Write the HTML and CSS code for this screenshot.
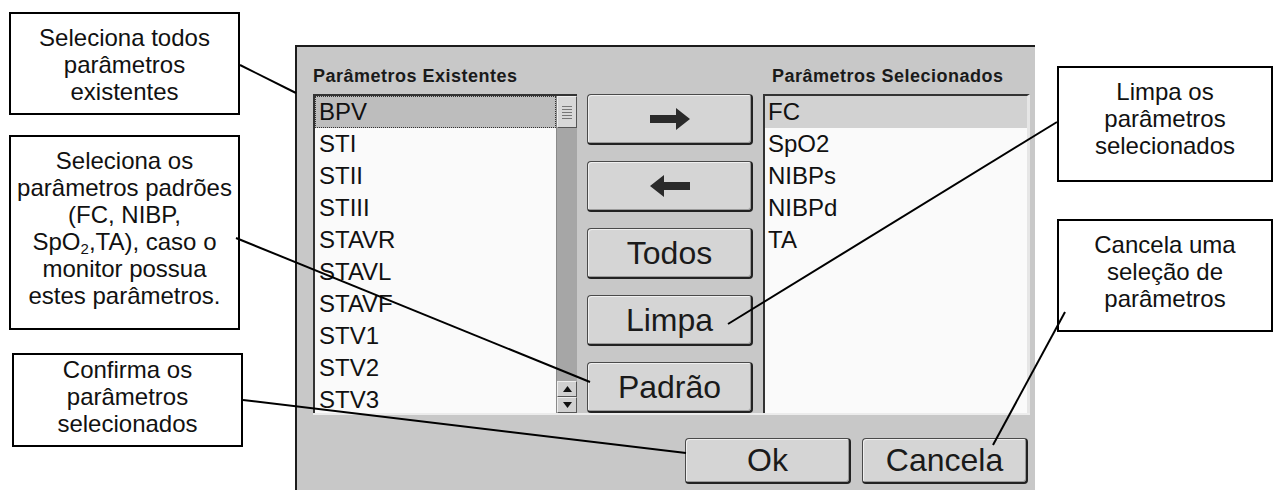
FILE: index.html
```html
<!DOCTYPE html>
<html lang="pt">
<head>
<meta charset="utf-8">
<title>Seleção de parâmetros</title>
<link rel="stylesheet" href="styles.css">
</head>
<body>
<div class="page">
  <div class="notes-left">
    <div class="note note-1">Seleciona todos<br>parâmetros<br>existentes</div>
    <div class="note note-2">Seleciona os<br>parâmetros padrões<br>(FC, NIBP,<br>SpO<sub class="sub">2</sub>,TA), caso o<br>monitor possua<br>estes parâmetros.</div>
    <div class="note note-3">Confirma os<br>parâmetros<br>selecionados</div>
  </div>

  <div class="dialog">
    <div class="panel">
      <div class="label label-left">Parâmetros Existentes</div>
      <div class="label label-right">Parâmetros Selecionados</div>

      <div class="list list-left">
        <div class="items">
          <div class="item selected">BPV</div>
          <div class="item">STI</div>
          <div class="item">STII</div>
          <div class="item">STIII</div>
          <div class="item">STAVR</div>
          <div class="item">STAVL</div>
          <div class="item">STAVF</div>
          <div class="item">STV1</div>
          <div class="item">STV2</div>
          <div class="item">STV3</div>
        </div>
        <div class="scrollbar">
          <div class="thumb"><span></span><span></span><span></span><span></span><span></span></div>
          <div class="track"></div>
          <div class="sb-btn"><svg width="9" height="6" viewBox="0 0 9 6"><polygon points="0,6 9,6 4.5,0" fill="#111"/></svg></div>
          <div class="sb-btn"><svg width="9" height="6" viewBox="0 0 9 6"><polygon points="0,0 9,0 4.5,6" fill="#111"/></svg></div>
        </div>
      </div>

      <div class="mid">
        <div class="btn"><svg width="40" height="22" viewBox="0 0 40 22"><polygon points="0,7 26,7 26,0 40,11 26,22 26,15 0,15" fill="#2a2a2a"/></svg></div>
        <div class="btn"><svg width="40" height="22" viewBox="0 0 40 22"><polygon points="40,7 14,7 14,0 0,11 14,22 14,15 40,15" fill="#2a2a2a"/></svg></div>
        <div class="btn">Todos</div>
        <div class="btn">Limpa</div>
        <div class="btn">Padrão</div>
      </div>

      <div class="list list-right">
        <div class="items">
          <div class="item selected-soft">FC</div>
          <div class="item">SpO2</div>
          <div class="item">NIBPs</div>
          <div class="item">NIBPd</div>
          <div class="item">TA</div>
        </div>
      </div>
    </div>
    <div class="sep"></div>
    <div class="actions">
      <div class="btn btn-wide">Ok</div>
      <div class="btn btn-wide">Cancela</div>
    </div>
  </div>

  <div class="notes-right">
    <div class="note note-4">Limpa os<br>parâmetros<br>selecionados</div>
    <div class="note note-5">Cancela uma<br>seleção de<br>parâmetros</div>
  </div>

  <svg class="leaders" width="1273" height="490" viewBox="0 0 1273 490">
    <g stroke="#000" stroke-width="2" fill="none">
      <line x1="240" y1="65" x2="296" y2="93"/>
      <line x1="236" y1="238" x2="590" y2="382"/>
      <line x1="243" y1="400" x2="686" y2="453"/>
      <line x1="1057" y1="122" x2="728" y2="324"/>
      <line x1="1065" y1="312" x2="993" y2="445"/>
    </g>
  </svg>
</div>
</body>
</html>
```

FILE: styles.css
```css
* { box-sizing: border-box; }

html, body {
  margin: 0;
  padding: 0;
  background: #ffffff;
}

body {
  font-family: "Liberation Sans", Arial, sans-serif;
  color: #111;
}

.page {
  position: relative;
  width: 1273px;
  height: 490px;
  overflow: hidden;
  display: flex;
}

/* ---------- callouts ---------- */
.notes-left {
  width: 295px;
  flex: none;
  display: flex;
  flex-direction: column;
  padding-top: 12px;
}

.notes-right {
  flex: none;
  width: 216px;
  margin-left: 22px;
  display: flex;
  flex-direction: column;
  padding-top: 66px;
}

.note {
  background: #fff;
  border: 2px solid #000;
  font-size: 24px;
  line-height: 27px;
  text-align: center;
  color: #111;
}

.note-1 { margin-left: 9px; width: 231px; height: 103px; padding-top: 10px; }
.note-2 { margin-left: 9px; width: 231px; height: 195px; margin-top: 20px; padding-top: 10px; }
.note-3 { margin-left: 12px; width: 231px; height: 94px; margin-top: 23px; padding-top: 1px; }
.note-4 { width: 216px; height: 116px; padding-top: 10px; }
.note-5 { width: 216px; height: 113px; margin-top: 37px; padding-top: 10px; }

.sub {
  font-size: 15px;
  line-height: 0;
  vertical-align: -4px;
}

/* ---------- dialog ---------- */
.dialog {
  flex: none;
  width: 740px;
  height: 445px;
  margin-top: 45px;
  background: #c8c8c8;
  border-top: 2px solid #1c1c1c;
  border-left: 2px solid #1c1c1c;
  padding-top: 18px;
}

.panel {
  display: grid;
  grid-template-columns: 264px 166px 267px;
  grid-template-rows: 22px 319px;
  column-gap: 10px;
  row-gap: 7px;
  margin-left: 16px;
}

.label {
  font-weight: bold;
  font-size: 18px;
  line-height: 22px;
  letter-spacing: 0.5px;
  color: #1a1a1a;
  white-space: nowrap;
}

.label-left { grid-column: 1; }
.label-right { grid-column: 3; padding-left: 9px; }

.list {
  display: flex;
  height: 319px;
  overflow: hidden;
  background: #fafafa;
  border-top: 2px solid #333;
  border-left: 2px solid #333;
}

.list-left { grid-column: 1; grid-row: 2; }
.list-right { grid-column: 3; grid-row: 2; border-right: 3px solid #e6e6e6; }

.items {
  flex: 1;
  overflow: hidden;
}

.item {
  height: 32px;
  font-size: 24px;
  line-height: 32px;
  padding-left: 3px;
  color: #111;
  white-space: nowrap;
}

.list-left .item { padding-left: 4px; }

.selected {
  background: #bdbdbd;
  outline: 1px dotted #333;
  outline-offset: -1px;
}

.selected-soft {
  background: #d2d2d2;
}

/* ---------- scrollbar ---------- */
.scrollbar {
  width: 21px;
  flex: none;
  display: flex;
  flex-direction: column;
  background: #a6a6a6;
  border-left: 1px solid #8a8a8a;
}

.thumb {
  height: 32px;
  background: #d8d8d8;
  border: 1px solid #555;
  border-top-color: #eee;
  border-left-color: #eee;
  display: flex;
  flex-direction: column;
  justify-content: center;
  gap: 2px;
  padding: 0 4px;
}

.thumb span {
  display: block;
  height: 1px;
  background: #777;
}

.track { flex: 1; }

.sb-btn {
  height: 16px;
  background: #d0d0d0;
  border: 1px solid #555;
  border-top-color: #eee;
  border-left-color: #eee;
  display: flex;
  align-items: center;
  justify-content: center;
}

/* ---------- buttons ---------- */
.mid {
  grid-column: 2;
  grid-row: 2;
  display: flex;
  flex-direction: column;
  gap: 16px;
}

.btn {
  height: 51px;
  background: #d5d5d5;
  border-style: solid;
  border-color: #4a4a4a #222 #222 #4a4a4a;
  border-width: 1px 2px 2px 1px;
  border-radius: 4px;
  box-shadow: inset 1px 1px 0 #f0f0f0, inset -1px -1px 0 #9a9a9a;
  display: flex;
  align-items: center;
  justify-content: center;
  font-size: 32px;
  color: #1a1a1a;
}

.sep {
  height: 2px;
  margin-left: 16px;
  margin-right: 5px;
  background: #ececec;
}

.actions {
  display: flex;
  justify-content: flex-end;
  gap: 11px;
  padding-right: 7px;
  margin-top: 23px;
}

.btn-wide {
  width: 166px;
  height: 46px;
}

/* ---------- leader lines (annotation overlay) ---------- */
.leaders {
  position: absolute;
  left: 0;
  top: 0;
  pointer-events: none;
}
```
